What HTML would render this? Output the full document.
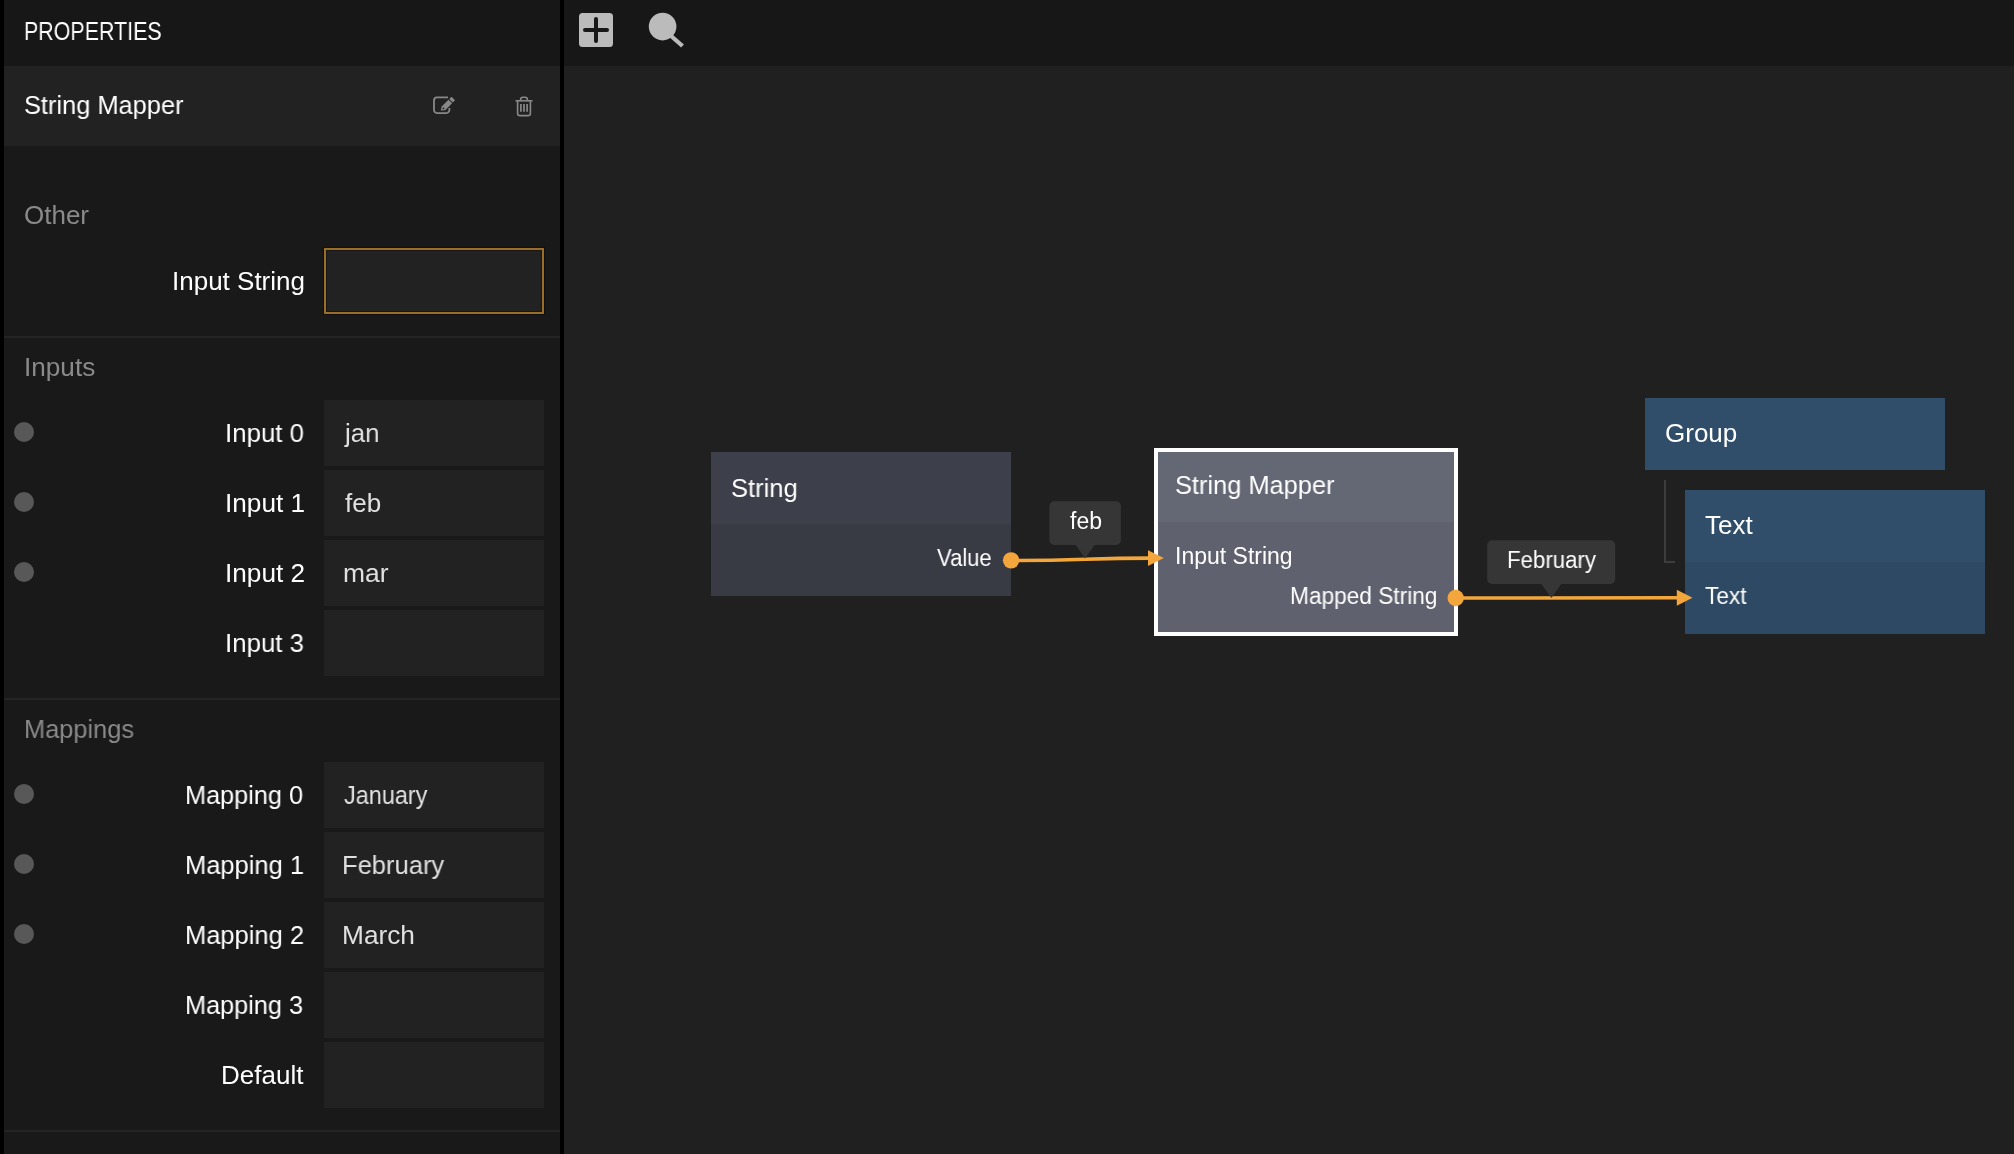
<!DOCTYPE html>
<html>
<head>
<meta charset="utf-8">
<style>
html,body{margin:0;padding:0;}
body{width:2014px;height:1154px;position:relative;overflow:hidden;background:#202020;font-family:"Liberation Sans",sans-serif;color:#fff;}
.a{position:absolute;}
.t{position:absolute;white-space:nowrap;transform-origin:0 0;will-change:transform;}
.box{position:absolute;left:324px;width:220px;height:66px;background:#222222;}
.dot{position:absolute;left:14px;width:20px;height:20px;border-radius:50%;background:#585858;}
</style>
</head>
<body>
<div class="a" style="left:0;top:0;width:4px;height:1154px;background:#000"></div>
<div class="a" style="left:4px;top:0;width:556px;height:1154px;background:#191919"></div>
<div class="a" style="left:4px;top:0;width:556px;height:66px;background:#171717"></div>
<div class="a" style="left:4px;top:66px;width:556px;height:80px;background:#222222"></div>
<div class="a" style="left:560px;top:0;width:4px;height:1154px;background:#000"></div>
<div class="a" style="left:564px;top:0;width:1450px;height:66px;background:#171717"></div>
<div class="a" style="left:4px;top:336px;width:556px;height:2px;background:#242424"></div>
<div class="a" style="left:4px;top:698px;width:556px;height:2px;background:#242424"></div>
<div class="a" style="left:4px;top:1130px;width:556px;height:2px;background:#242424"></div>
<div class="box" style="top:248px;box-sizing:border-box;border:2px solid #9a6e28;box-shadow:0 0 1px 1px rgba(0,0,0,0.35),inset 0 0 1px 1px rgba(0,0,0,0.3)"></div>
<div class="box" style="top:400px"></div>
<div class="box" style="top:470px"></div>
<div class="box" style="top:540px"></div>
<div class="box" style="top:610px"></div>
<div class="box" style="top:762px"></div>
<div class="box" style="top:832px"></div>
<div class="box" style="top:902px"></div>
<div class="box" style="top:972px"></div>
<div class="box" style="top:1042px"></div>
<div class="dot" style="top:422px"></div>
<div class="dot" style="top:492px"></div>
<div class="dot" style="top:562px"></div>
<div class="dot" style="top:784px"></div>
<div class="dot" style="top:854px"></div>
<div class="dot" style="top:924px"></div>
<div class="a" style="left:711px;top:452px;width:300px;height:72px;background:#3d404a"></div>
<div class="a" style="left:711px;top:524px;width:300px;height:72px;background:#383a44"></div>
<div class="a" style="left:1154px;top:448px;width:304px;height:188px;background:#fff"></div>
<div class="a" style="left:1158px;top:452px;width:296px;height:70px;background:#646874"></div>
<div class="a" style="left:1158px;top:522px;width:296px;height:110px;background:#5f626e"></div>
<div class="a" style="left:1645px;top:398px;width:300px;height:72px;background:#304e6a"></div>
<div class="a" style="left:1664px;top:480px;width:2px;height:83px;background:#3d3d3d"></div>
<div class="a" style="left:1664px;top:561px;width:11px;height:2px;background:#3d3d3d"></div>
<div class="a" style="left:1685px;top:490px;width:300px;height:72px;background:#304e6a"></div>
<div class="a" style="left:1685px;top:562px;width:300px;height:72px;background:#2e4963"></div>
<svg class="a" style="left:0;top:0" width="2014" height="1154" viewBox="0 0 2014 1154">
<rect x="579" y="13" width="34" height="34" rx="3.5" fill="#bbbbbb"/>
<rect x="594" y="17" width="4" height="26" rx="2" fill="#171717"/>
<rect x="583" y="28" width="26" height="4" rx="2" fill="#171717"/>
<circle cx="662.6" cy="26.6" r="13.8" fill="#bbbbbb"/>
<line x1="670" y1="35" x2="682.5" y2="46" stroke="#bbbbbb" stroke-width="4.3"/>
<g fill="none" stroke="#888" stroke-width="1.8">
<path d="M448 97.4 H437 a3 3 0 0 0 -3 3 V110.1 a3 3 0 0 0 3 3 H446.4 a3 3 0 0 0 3 -3 V107.9"/>
</g>
<g transform="translate(441,110.8) rotate(-45)" fill="#888">
<path d="M0 -0.3 L3.4 -2.55 H13.2 V2.55 H3.4 Z"/>
<rect x="14.1" y="-2.55" width="3.3" height="5.1" rx="0.8"/>
</g>
<circle cx="443.4" cy="108.4" r="0.9" fill="#222"/>
<g fill="none" stroke="#888" stroke-width="1.6">
<path d="M515.5 100.8 H532.5"/>
<path d="M520.6 100.8 V99.6 a2.4 2.4 0 0 1 2.4 -2.4 H525 a2.4 2.4 0 0 1 2.4 2.4 V100.8"/>
<path d="M517.6 101 V113.2 a2.4 2.4 0 0 0 2.4 2.4 H528 a2.4 2.4 0 0 0 2.4 -2.4 V101"/>
</g>
<g stroke="#888" stroke-width="1.7"><path d="M520.9 104 V111.8 M524 104 V111.8 M527.1 104 V111.8"/></g>
<path d="M1011 560.5 C1085 560.5, 1085 558.1, 1152 558.1" stroke="#f3a63c" stroke-width="3.6" fill="none"/>
<path d="M1148 550.3 L1163.8 558.1 L1148 565.9 Z" fill="#f3a63c"/>
<circle cx="1011.1" cy="560.35" r="8.2" fill="#f3a63c"/>
<rect x="1049.4" y="501.2" width="71.5" height="43.7" rx="5" fill="#363636"/>
<path d="M1075.4 544.5 L1095 544.5 L1085 558.4 Z" fill="#363636"/>
<path d="M1456 598 L1678 597.8" stroke="#f3a63c" stroke-width="3.6" fill="none"/>
<path d="M1676.8 589.8 L1692.5 597.8 L1676.8 605.8 Z" fill="#f3a63c"/>
<circle cx="1455.7" cy="598" r="8.2" fill="#f3a63c"/>
<rect x="1487.2" y="540.2" width="128" height="43.7" rx="5" fill="#363636"/>
<path d="M1541 583.5 L1561.5 583.5 L1551.4 597.9 Z" fill="#363636"/>
</svg>
<div class="t" style="left:23.75px;top:18px;font-size:26px;line-height:26px;color:#ffffff;transform:scaleX(0.8238);">PROPERTIES</div>
<div class="t" style="left:23.62px;top:92px;font-size:26px;line-height:26px;color:#ffffff;transform:scaleX(0.9765);">String Mapper</div>
<div class="t" style="left:24.0px;top:202px;font-size:26px;line-height:26px;color:#8a8a8a;">Other</div>
<div class="t" style="left:23.69px;top:354px;font-size:26px;line-height:26px;color:#8a8a8a;transform:scaleX(1.0059);">Inputs</div>
<div class="t" style="left:23.75px;top:716px;font-size:26px;line-height:26px;color:#8a8a8a;transform:scaleX(0.9764);">Mappings</div>
<div class="t" style="left:172.31px;top:268px;font-size:26px;line-height:26px;color:#ffffff;">Input String</div>
<div class="t" style="left:224.71px;top:420px;font-size:26px;line-height:26px;color:#ffffff;transform:scaleX(0.9935);">Input 0</div>
<div class="t" style="left:224.69px;top:490px;font-size:26px;line-height:26px;color:#ffffff;transform:scaleX(1.0066);">Input 1</div>
<div class="t" style="left:224.69px;top:560px;font-size:26px;line-height:26px;color:#ffffff;transform:scaleX(1.0066);">Input 2</div>
<div class="t" style="left:224.71px;top:630px;font-size:26px;line-height:26px;color:#ffffff;transform:scaleX(0.9935);">Input 3</div>
<div class="t" style="left:185.46px;top:782px;font-size:26px;line-height:26px;color:#ffffff;transform:scaleX(0.9723);">Mapping 0</div>
<div class="t" style="left:185.44px;top:852px;font-size:26px;line-height:26px;color:#ffffff;transform:scaleX(0.9805);">Mapping 1</div>
<div class="t" style="left:185.44px;top:922px;font-size:26px;line-height:26px;color:#ffffff;transform:scaleX(0.9805);">Mapping 2</div>
<div class="t" style="left:185.46px;top:992px;font-size:26px;line-height:26px;color:#ffffff;transform:scaleX(0.9723);">Mapping 3</div>
<div class="t" style="left:221.0px;top:1062px;font-size:26px;line-height:26px;color:#ffffff;">Default</div>
<div class="t" style="left:344.59px;top:420px;font-size:26px;line-height:26px;color:#e0e0e0;transform:scaleX(0.9941);">jan</div>
<div class="t" style="left:344.7px;top:490px;font-size:26px;line-height:26px;color:#e0e0e0;transform:scaleX(0.9943);">feb</div>
<div class="t" style="left:343.07px;top:560px;font-size:26px;line-height:26px;color:#e0e0e0;transform:scaleX(1.0163);">mar</div>
<div class="t" style="left:344.2px;top:782px;font-size:26px;line-height:26px;color:#e0e0e0;transform:scaleX(0.9011);">January</div>
<div class="t" style="left:342.34px;top:852px;font-size:26px;line-height:26px;color:#e0e0e0;transform:scaleX(0.9824);">February</div>
<div class="t" style="left:342.28px;top:922px;font-size:26px;line-height:26px;color:#e0e0e0;transform:scaleX(1.0101);">March</div>
<div class="t" style="left:730.72px;top:475px;font-size:26px;line-height:26px;color:#ffffff;transform:scaleX(0.9818);">String</div>
<div class="t" style="left:936.7px;top:547px;font-size:23px;line-height:23px;color:#ffffff;transform:scaleX(0.9571);">Value</div>
<div class="t" style="left:1175.42px;top:472px;font-size:26px;line-height:26px;color:#ffffff;transform:scaleX(0.9765);">String Mapper</div>
<div class="t" style="left:1175.0px;top:545px;font-size:23px;line-height:23px;color:#ffffff;">Input String</div>
<div class="t" style="left:1290.13px;top:585px;font-size:23px;line-height:23px;color:#ffffff;transform:scaleX(0.9856);">Mapped String</div>
<div class="t" style="left:1664.6px;top:420px;font-size:26px;line-height:26px;color:#ffffff;">Group</div>
<div class="t" style="left:1705.4px;top:512px;font-size:26px;line-height:26px;color:#ffffff;transform:scaleX(0.9917);">Text</div>
<div class="t" style="left:1705.4px;top:585px;font-size:23px;line-height:23px;color:#ffffff;transform:scaleX(0.9857);">Text</div>
<div class="t" style="left:1069.6px;top:510px;font-size:23px;line-height:23px;color:#ffffff;transform:scaleX(0.9935);">feb</div>
<div class="t" style="left:1506.76px;top:549px;font-size:23px;line-height:23px;color:#ffffff;transform:scaleX(0.9678);">February</div>
</body>
</html>
